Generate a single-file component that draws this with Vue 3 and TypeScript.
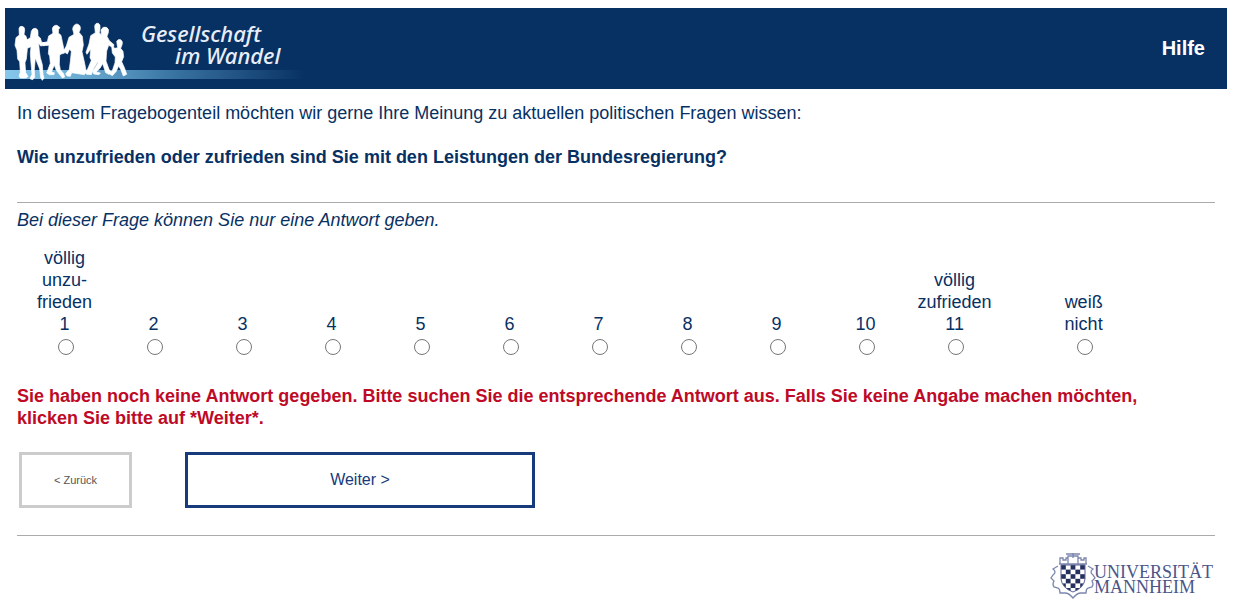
<script setup lang="ts">
import { ref } from 'vue'

interface Option {
  value: string
  lines: string[]
  separate?: boolean
}

const options: Option[] = [
  { value: '1', lines: ['völlig', 'unzu-', 'frieden', '1'] },
  ...Array.from({ length: 9 }, (_, i) => ({ value: String(i + 2), lines: [String(i + 2)] })),
  { value: '11', lines: ['völlig', 'zufrieden', '11'] },
  { value: 'weiss-nicht', lines: ['weiß', 'nicht'], separate: true },
]

const answer = ref<string | null>(null)

// Chequered field of the university crest
const cells: { x: number; y: number }[] = []
for (let row = 0; row < 6; row++) {
  for (let col = 0; col < 5; col++) {
    if ((row + col) % 2 === 0) cells.push({ x: 11 + col * 4.8, y: 13 + row * 4.6 })
  }
}
</script>

<template>
  <div class="page">
    <header class="banner">
      <svg class="brand" viewBox="0 0 300 81" role="img" aria-label="Gesellschaft im Wandel">
        <defs>
          <linearGradient id="band" x1="0" x2="1" y1="0" y2="0">
            <stop offset="0" stop-color="#86c8ec" />
            <stop offset="0.3" stop-color="#64a4cc" />
            <stop offset="0.55" stop-color="#3a75a4" />
            <stop offset="1" stop-color="#083163" />
          </linearGradient>
        </defs>
        <rect x="0" y="62" width="300" height="9" fill="url(#band)" />
        <g transform="translate(-5 -8) scale(0.33333)" fill="#fff" stroke="#fff" stroke-width="2" stroke-linejoin="round">
          <path d="M57 86Q58 78 66 79Q75 81 74 91L72 103L78 109L83 124L78 129L82 148L79 177L75 188L77 218L84 229L79 234L61 234L57 228L61 217L59 185L53 177L51 151L45 136L48 113L58 105Z" />
          <path d="M94 94Q97 84 107 85Q115 88 114 98L114 108L121 114L125 127L137 128L134 136L122 138L116 130L118 153L121 173L127 194L129 223L132 234L127 241L122 233L119 207L106 174L103 209L104 232L98 239L90 236L96 223L93 190L91 160L93 140L82 145L77 132L79 121L91 113Z" />
          <path d="M157 87Q159 75 171 76L180 83L176 88L175 99L183 106L187 125L194 159L184 162L179 165L178 193L181 209L191 221L194 231L187 234L169 211L163 196L154 216L163 218L162 224L148 224L140 219L151 190L149 168L145 161L147 136L129 137L127 129L142 125L146 108L159 100Z" />
          <path d="M218 87Q220 73 231 72Q243 75 241 88L237 97L247 109L250 135L246 155L254 190L259 217L253 224L226 220L215 218L211 229L201 228L197 221L208 208L211 184L214 155L209 147L202 162L190 154L199 138L207 112L222 103Z" />
          <path d="M284 79Q286 68 295 70Q302 73 300 87L298 98L305 106L301 145L299 174L292 188L282 204L274 224L260 223L255 216L263 207L274 181L270 173L272 147L261 163L258 157L267 132L272 107L286 98Z" />
          <path d="M303 90Q308 78 319 82Q328 86 325 98L321 109L328 122L342 134L340 143L326 136L320 153L318 183L327 208L334 216L327 223L317 218L308 191L299 206L288 216L301 219L297 224L281 222L278 214L293 190L295 159L291 145L292 118L304 107Z" />
          <path d="M350 124Q354 116 362 119Q370 124 366 135L362 145L369 154L371 170L365 185L374 205L380 223L370 228L363 210L356 198L348 215L337 227L325 220L337 212L345 188L346 171L337 159L335 139L345 145L353 143Z" />
        </g>
        <text class="brand-text" x="136" y="34">Gesellschaft</text>
        <text class="brand-text" x="170" y="56">im Wandel</text>
      </svg>
      <a class="help" href="#hilfe">Hilfe</a>
    </header>

    <main class="content">
      <p class="intro">
        In diesem Fragebogenteil möchten wir gerne Ihre Meinung zu aktuellen politischen Fragen wissen:
      </p>
      <h1 id="question" class="question">
        Wie unzufrieden oder zufrieden sind Sie mit den Leistungen der Bundesregierung?
      </h1>
      <hr class="rule" />
      <p class="hint">Bei dieser Frage können Sie nur eine Antwort geben.</p>

      <div class="scale" role="radiogroup" aria-labelledby="question">
        <label
          v-for="o in options"
          :key="o.value"
          class="option"
          :class="{ separate: o.separate }"
        >
          <span v-for="line in o.lines" :key="line" class="line">{{ line }}</span>
          <input v-model="answer" class="radio" type="radio" name="answer" :value="o.value" />
        </label>
      </div>

      <p class="error" role="alert">
        Sie haben noch keine Antwort gegeben. Bitte suchen Sie die entsprechende Antwort aus. Falls
        Sie keine Angabe machen möchten, klicken Sie bitte auf *Weiter*.
      </p>

      <div class="actions">
        <button class="back" type="button">&lt; Zurück</button>
        <button class="next" type="button">Weiter &gt;</button>
      </div>
      <hr class="rule" />

      <footer class="footer">
        <svg class="university" viewBox="0 0 165 48" role="img" aria-label="Universität Mannheim">
          <g fill="none" stroke="#7c86ad" stroke-width="1.3">
            <path d="M10 12V6h3v2h3V6h2v6M28 12V6h3v2h3V6h2v6M18 12V4h10v8M16 2h14M23 1v5M9 12h28" />
            <path d="M8 14L3 17q4 3 0 6l-2 3 3 3q-2 3 0 6l4 1q2 1 2 5h5q4 0 8 5 4-5 8-5h5q0-4 2-5l4-1q2-3 0-6l3-3-2-3q-4-3 0-6l-5-3" />
          </g>
          <clipPath id="shield"><path d="M11 13h24v14q-1 9-12 13Q12 36 11 27Z" /></clipPath>
          <g clip-path="url(#shield)" fill="#25305f">
            <rect v-for="c in cells" :key="`${c.x}-${c.y}`" :x="c.x" :y="c.y" width="4.8" height="4.6" />
          </g>
          <path d="M11 13h24v14q-1 9-12 13Q12 36 11 27Z" fill="none" stroke="#5a6594" />
          <text class="university-text" x="44" y="26">UNIVERSITÄT</text>
          <text class="university-text" x="44" y="41">MANNHEIM</text>
        </svg>
      </footer>
    </main>
  </div>
</template>

<style>
body {
  background: #fff;
}
</style>

<style scoped>
.page {
  padding: 8px 8px 0 5px;
  font: 18px/22px "Liberation Sans", Arial, sans-serif;
  color: #083163;
}

.banner {
  display: flex;
  align-items: center;
  justify-content: space-between;
  padding-right: 22px;
  background: #083163;
}

.brand {
  display: block;
  width: 300px;
  height: 81px;
}

.brand-text {
  font: italic 500 22px "Noto Sans", "Open Sans", sans-serif;
  fill: #e8eef8;
}

.help {
  padding-bottom: 2px;
  color: #fff;
  font-size: 20px;
  font-weight: bold;
  text-decoration: none;
}

.content {
  padding: 13px 12px 0;
}

.intro,
.question,
.hint,
.error {
  margin: 0;
  font-size: 18px;
}

.question {
  margin-top: 22px;
}

.rule {
  height: 1px;
  margin: 0;
  border: 0;
  background: #aaa;
}

.question + .rule {
  margin-top: 34px;
}

.hint {
  margin-top: 6px;
  font-style: italic;
}

.scale {
  display: grid;
  grid-template-columns: repeat(11, 1fr) 40px 1fr;
  align-items: end;
  width: 92.5%;
  margin: 16px 0 0 3px;
}

.option {
  display: flex;
  flex-direction: column;
  align-items: center;
}

.separate {
  grid-column: 13;
}

.line {
  display: block;
}

.radio {
  width: 16px;
  height: 16px;
  margin: 4px 3px 0 5px;
}

.error {
  margin-top: 30px;
  padding-right: 24px;
  color: #be0a26;
  font-weight: bold;
}

.actions {
  display: flex;
  gap: 53px;
  margin: 23px 0 27px 2px;
}

.actions button {
  height: 56px;
  padding: 0;
  background: #fff;
  font-family: "Liberation Sans", Arial, sans-serif;
}

.back {
  width: 113px;
  border: 3px solid #ccc;
  color: #555;
  font-size: 11px;
}

.next {
  width: 350px;
  border: 3px solid #163a7a;
  color: #163a7a;
  font-size: 16px;
}

.footer {
  display: flex;
  justify-content: flex-end;
  margin-top: 16px;
}

.university {
  display: block;
  width: 165px;
  height: 48px;
}

.university-text {
  font: 18px "Liberation Serif", "Times New Roman", serif;
  fill: #4a5688;
}
</style>
